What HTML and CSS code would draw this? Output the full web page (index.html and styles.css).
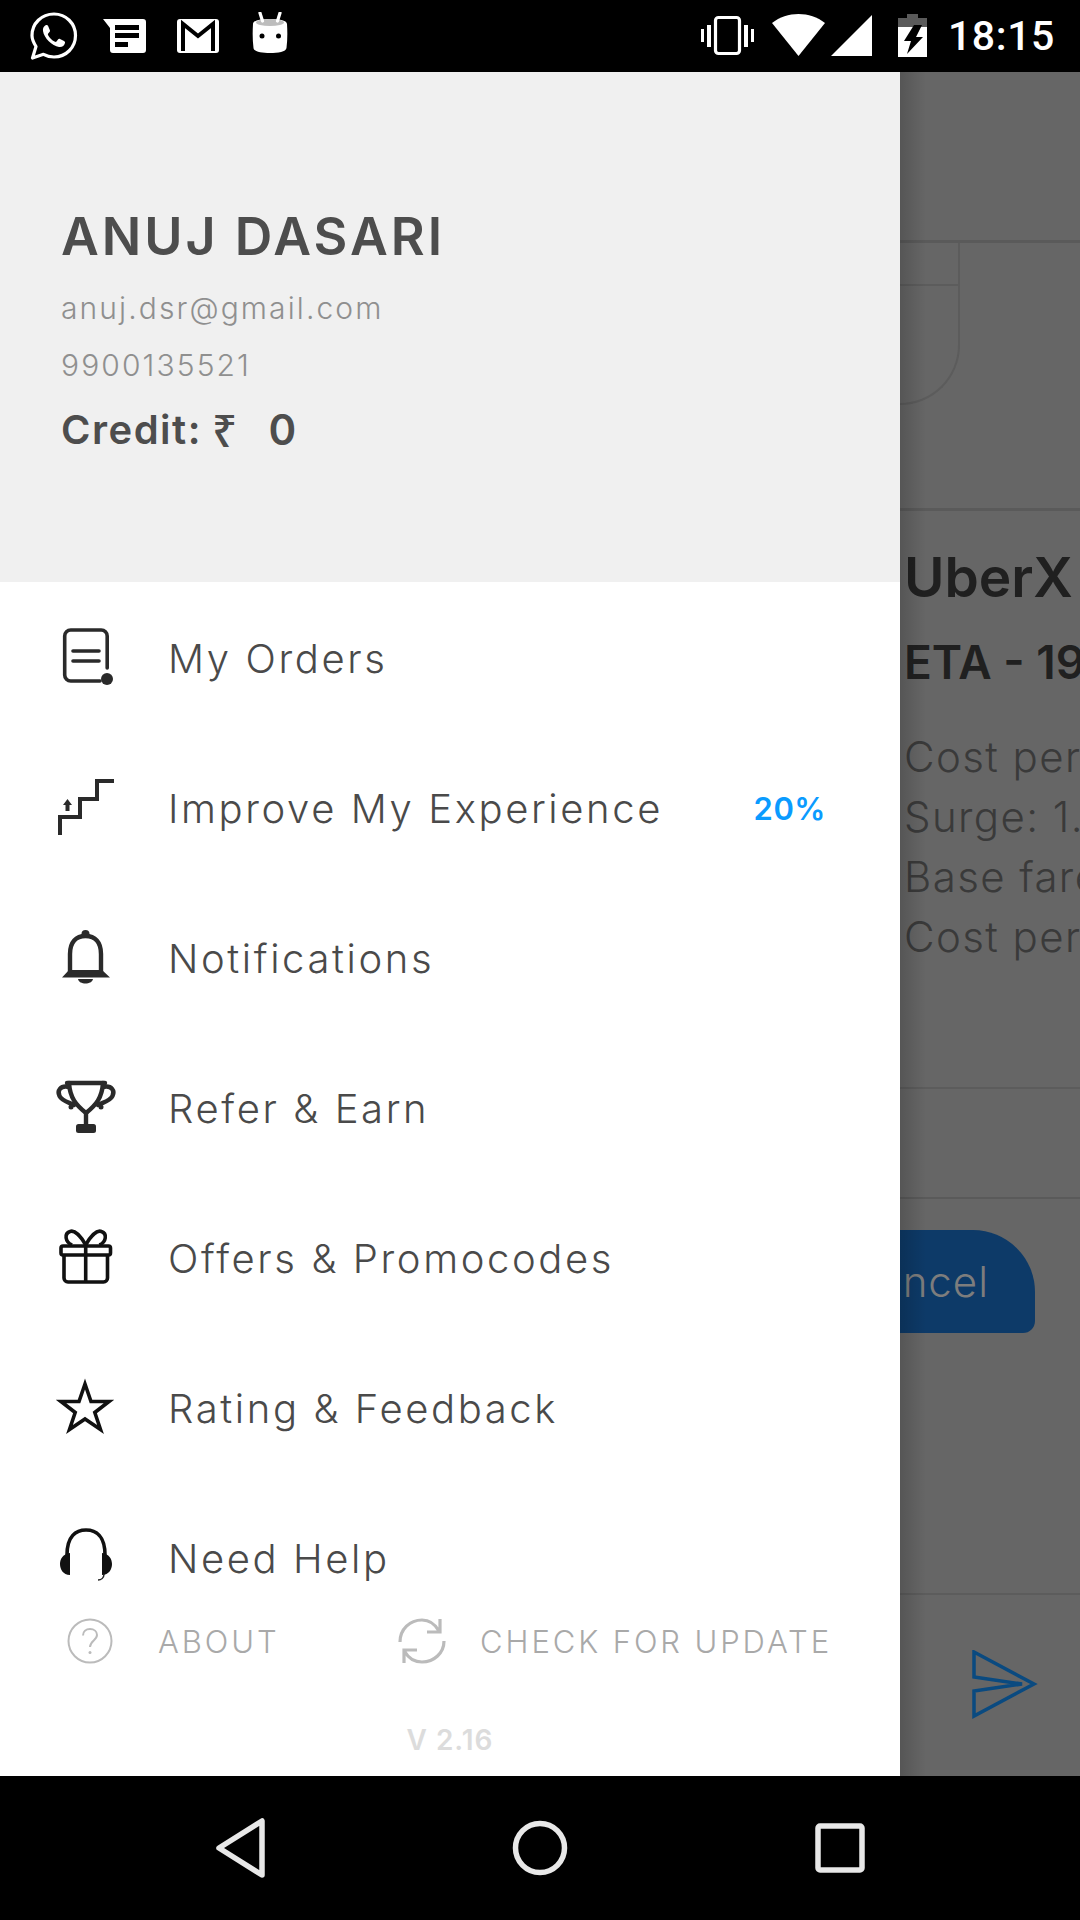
FILE: index.html
```html
<!DOCTYPE html>
<html lang="en">
<head>
<meta charset="utf-8">
<title>Drawer</title>
<link rel="stylesheet" href="styles.css">
</head>
<body>
<div class="screen">
  <header class="statusbar">
    <svg class="st-icon" viewBox="0 0 48 48"><path class="st-line" d="M2.5 46 L6 34.5 C3.5 30.5 2 27 2 23.5 C2 11.5 11.5 2 24 2 C36 2 45.5 11.5 45.5 23.5 C45.5 35.5 36 45 24 45 C20 45 16.5 44 13.5 42.3 Z"/><path class="st-fill" d="M16 13 C14 14 12.5 16 13 19 C14 26 22 34 29 35 C32 35.5 34.5 33.5 35 31 C35.2 30 34.8 29.5 34 29 L30 27 C29 26.6 28.5 27 28 27.6 L26.5 29.5 C26 30 25.5 30 25 29.8 C21.5 28 19.5 26 18 23 C17.8 22.5 17.8 22 18.2 21.6 L19.7 19.8 C20.1 19.3 20.1 18.8 19.9 18.3 L18 13.8 C17.6 13 17 12.8 16 13 Z"/></svg>
    <svg class="st-icon" viewBox="0 0 48 48"><path class="st-fill" d="M1 7 H41 a3 3 0 0 1 3 3 V38 a3 3 0 0 1 -3 3 H11 a3 3 0 0 1 -3 -3 V16 Z"/><path class="st-cut" d="M13 13 H37 V18 H13 Z M13 21 H37 V26 H13 Z M13 30 H26 V35 H13 Z"/></svg>
    <svg class="st-icon" viewBox="0 0 48 48"><rect class="st-fill" x="3" y="7" width="42" height="34" rx="3"/><path class="st-cut-line" d="M9 39 V12 L24 24 L39 12 V39"/></svg>
    <svg class="st-icon" viewBox="0 0 48 48"><path class="st-fill" d="M24 7 C32 7 41 8 41 12 C41.5 20 41.5 28 40.5 36 C40 40 32 41 24 41 C16 41 8 40 7.5 36 C6.5 28 6.5 20 7 12 C7 8 16 7 24 7 Z"/><ellipse class="st-dim" cx="24" cy="10.5" rx="14" ry="3.5"/><path class="st-line" d="M14 1 L16.5 9 M34 1 L31.5 9"/><circle class="st-cut" cx="16" cy="24" r="2.5"/><circle class="st-cut" cx="32.5" cy="24" r="2.5"/></svg>
    <svg class="st-vibrate" viewBox="0 0 55 48"><rect class="st-line" x="16.5" y="5.5" width="24" height="36" rx="3"/><path class="st-fill" d="M2 17 H5 V30 H2 Z M8 13 H12 V35 H8 Z M45 13 H49 V35 H45 Z M52 17 H55 V30 H52 Z"/></svg>
    <svg class="st-wifi" viewBox="0 0 53 48"><path class="st-fill" d="M0 11 C15 -1 38 -1 53 11 L26.5 44 Z"/></svg>
    <svg class="st-signal" viewBox="0 0 41 48"><path class="st-fill" d="M41 3 V44 H0 Z"/></svg>
    <svg class="st-battery" viewBox="0 0 29 48"><path class="st-dark" d="M9 2 H20 V6 H29 V15 H0 V6 H9 Z"/><path class="st-fill" d="M0 15 H29 V45 H0 Z"/><path class="st-cut" d="M16 13 H24 L18 25 H25 L9 42 L13 29 H6 Z"/></svg>
    <span class="clock">18:15</span>
  </header>

  <main class="stage">
    <aside class="drawer">
      <section class="profile">
        <h1 class="profile-name">ANUJ DASARI</h1>
        <p class="profile-contact">anuj.dsr@gmail.com</p>
        <p class="profile-contact">9900135521</p>
        <p class="profile-credit"><span>Credit:</span><span class="rupee">₹</span><span class="credit-value">0</span></p>
      </section>

      <nav class="menu">
        <a class="menu-item">
          <svg class="menu-icon" viewBox="0 0 60 60"><path class="ic-line" d="M51.2 40 V8 a6 6 0 0 0 -6 -6 H14.7 a6 6 0 0 0 -6 6 V47 a6 6 0 0 0 6 6 H44"/><path class="ic-line" d="M17 23 H43 M17 33 H43"/><circle class="ic-fill" cx="51" cy="51" r="6"/></svg>
          <span class="menu-label">My Orders</span>
        </a>
        <a class="menu-item">
          <svg class="menu-icon" viewBox="0 0 60 60"><path class="ic-line ic-square" d="M4 57 V39 H24 V21 H41 V3 H58"/><path class="ic-fill" d="M11.5 21 L16 27 H13.5 V33 H9.5 V27 H7 Z"/></svg>
          <span class="menu-label">Improve My Experience</span>
          <span class="menu-badge">20%</span>
        </a>
        <a class="menu-item">
          <svg class="menu-icon" viewBox="0 0 60 60"><path class="ic-heavy" d="M14 46 V26 C14 14 20 8 29.5 8 C39 8 45 14 45 26 V46"/><path class="ic-fill" d="M6 49.5 L13 42 H46 L54 49.5 Z M22 51 H37 C36.5 54 33 55.5 29.5 55.5 C26 55.5 22.5 54 22 51 Z"/><circle class="ic-fill" cx="29.5" cy="6" r="4"/></svg>
          <span class="menu-label">Notifications</span>
        </a>
        <a class="menu-item">
          <svg class="menu-icon" viewBox="0 0 60 60"><path class="ic-heavy" d="M11 5 H49"/><path class="ic-heavy" d="M13 5 C14 20 20 27 30 35 C40 27 46 20 47 5"/><path class="ic-heavy" d="M30 35 V48"/><rect class="ic-fill" x="20" y="46" width="20" height="9" rx="2.5"/><path class="ic-heavy" d="M13 9 C4 7 1 13 3.5 18 C6 23 12 24 18 27"/><path class="ic-heavy" d="M47 9 C56 7 59 13 56.5 18 C54 23 48 24 42 27"/><circle class="ic-fill" cx="15" cy="29" r="2.5"/><circle class="ic-fill" cx="45" cy="29" r="2.5"/></svg>
          <span class="menu-label">Refer &amp; Earn</span>
        </a>
        <a class="menu-item">
          <svg class="menu-icon" viewBox="0 0 60 60"><rect class="ic-strong" x="5" y="18" width="49.5" height="9" rx="2"/><path class="ic-strong" d="M8 27 V50 a4 4 0 0 0 4 4 H47.5 a4 4 0 0 0 4 -4 V27 M29.7 18 V54"/><path class="ic-strong" d="M29.7 17 C24 7 18 2 14 3.5 C8 5.5 9 14 16 17 M29.7 17 C35.4 7 41.4 2 45.4 3.5 C51.4 5.5 50.4 14 43.4 17"/></svg>
          <span class="menu-label">Offers &amp; Promocodes</span>
        </a>
        <a class="menu-item">
          <svg class="menu-icon" viewBox="0 0 60 60"><path class="ic-strong ic-miter" d="M29 6 L35 23.5 H53 L38.8 34.5 L44.5 51.5 L29 41 L13.5 51.5 L19.2 34.5 L5 23.5 H23 Z"/></svg>
          <span class="menu-label">Rating &amp; Feedback</span>
        </a>
        <a class="menu-item">
          <svg class="menu-icon" viewBox="0 0 60 60"><path class="ic-strong" d="M11 27 C11 8 20 2 30 2 C40 2 49 8 49 27"/><path class="ic-black" d="M14 25 V47 C7 47 4 41 4 36 C4 31 7 26 14 25 Z M46 25 V47 C53 47 56 41 56 36 C56 31 53 26 46 25 Z"/><path class="ic-thin" d="M48 46 C48 50 45 52 42 52"/></svg>
          <span class="menu-label">Need Help</span>
        </a>
      </nav>

      <footer class="drawer-footer">
        <div class="footer-links">
          <svg class="footer-icon" viewBox="0 0 48 48"><circle class="ft-line" cx="24" cy="24" r="21.5"/><path class="ft-line" d="M17 18.5 C17 14.5 20 12 24 12 C28 12 31 14.5 31 18 C31 23 24 24 24 30"/><circle class="ft-dot" cx="24" cy="35.5" r="1.5"/></svg>
          <span class="footer-about">ABOUT</span>
          <svg class="footer-icon footer-refresh" viewBox="0 0 48 48"><path class="ft-strong" d="M2 25 C2 12 12 3 24 3 C31 3 37 7 41 14 M42 2 V15 H29 M46 24 C46 36 36 45 24 45 C17 45 11 42 7 35 M6 46 V33 H19"/></svg>
          <span class="footer-update">CHECK FOR UPDATE</span>
        </div>
        <p class="footer-version">V 2.16</p>
      </footer>
    </aside>

    <div class="backdrop">
      <div class="bd-top"></div>
      <div class="bd-route"><div class="bd-route-line"></div></div>
      <div class="bd-gap"></div>
      <div class="bd-info">
        <p class="bd-title">UberX</p>
        <p class="bd-eta">ETA - 19 min</p>
        <div class="bd-fares">
          <p>Cost per km</p>
          <p>Surge: 1.5x</p>
          <p>Base fare</p>
          <p>Cost per min</p>
        </div>
      </div>
      <div class="bd-spacer"></div>
      <div class="bd-action"><div class="bd-cancel">Cancel</div></div>
      <div class="bd-send">
        <svg class="send-icon" viewBox="0 0 66 70"><path class="send-line" d="M2 2 L62 34 L2 66 V41 L50 34 L2 27 Z"/></svg>
      </div>
    </div>
  </main>

  <footer class="navbar">
    <svg class="nav-back" viewBox="0 0 60 60"><path class="nav-line" d="M49 3 V57 L6 30 Z"/></svg>
    <svg class="nav-home" viewBox="0 0 60 60"><circle class="nav-line" cx="30" cy="30" r="24.5"/></svg>
    <svg class="nav-recent" viewBox="0 0 60 60"><rect class="nav-line" x="8" y="8" width="44" height="44" rx="2"/></svg>
  </footer>
</div>
</body>
</html>
```

FILE: styles.css
```css
* { box-sizing: border-box; margin: 0; padding: 0; }
html, body { width: 1080px; height: 1920px; overflow: hidden; background: #000; }
body { font-family: Inter, "Open Sans", sans-serif; color: #4f4f4f; }
.screen { width: 1080px; height: 1920px; display: flex; flex-direction: column; }

/* status bar */
.statusbar { height: 72px; background: #000; display: flex; align-items: center; padding: 0 25px 0 30px; flex: none; }
.statusbar svg { height: 48px; flex: none; }
.st-icon { width: 48px; margin-right: 24px; }
.st-vibrate { width: 55px; margin-left: auto; }
.st-wifi { width: 53px; margin-left: 18px; }
.st-signal { width: 41px; margin-left: 6px; }
.st-battery { width: 29px; margin-left: 26px; }
.st-fill { fill: #fff; }
.st-cut { fill: #000; }
.st-dim { fill: #bdbdbd; }
.st-dark { fill: #5a5a5a; }
.st-line { fill: none; stroke: #fff; stroke-width: 3.2; stroke-linecap: round; stroke-linejoin: round; }
.st-cut-line { fill: none; stroke: #000; stroke-width: 4; }
.clock { font-family: Roboto, sans-serif; font-size: 41px; font-weight: 500; color: #fff; margin-left: 21px; line-height: 48px; letter-spacing: .6px; }

/* layout */
.stage { flex: 1; min-height: 0; display: flex; }
.drawer { width: 900px; flex: none; background: #fff; display: flex; flex-direction: column; }

/* profile */
.profile { height: 510px; flex: none; background: #f0f0f0; padding: 135px 0 0 61px; }
.profile-name { font-size: 52px; font-weight: 600; line-height: 60px; color: #4d4d4d; letter-spacing: 3px; }
.profile-contact { font-size: 30px; font-weight: 300; line-height: 57px; color: #8f8f8f; letter-spacing: 2.1px; }
.profile-contact:first-of-type { margin-top: 13px; }
.profile-credit { font-size: 40px; font-weight: 600; line-height: 60px; color: #4d4d4d; display: flex; margin-top: 6px; letter-spacing: 1.5px; }
.rupee { margin-left: 10px; font-weight: 500; font-family: "Noto Sans", "DejaVu Sans", sans-serif; font-size: 44px; }
.credit-value { margin-left: 30px; font-size: 42px; }

/* menu */
.menu { flex: 1; min-height: 0; overflow: hidden; padding-top: 1px; }
.menu-item { height: 150px; display: flex; align-items: center; padding: 0 74px 0 56px; }
.menu-icon { width: 60px; height: 60px; flex: none; overflow: visible; }
.menu-label { margin-left: 52px; font-size: 40px; font-weight: 300; color: #4a4a4a; letter-spacing: 2.6px; white-space: nowrap; }
.menu-badge { margin-left: auto; font-size: 31px; font-weight: 600; color: #0a9bff; letter-spacing: .5px; }
.ic-line { fill: none; stroke: #2a2a2a; stroke-width: 3.6; stroke-linecap: round; stroke-linejoin: round; }
.ic-square { stroke-linecap: butt; stroke-linejoin: miter; stroke-width: 4; }
.ic-heavy { fill: none; stroke: #2a2a2a; stroke-width: 4.4; stroke-linecap: round; stroke-linejoin: round; }
.ic-fill { fill: #2a2a2a; }
.ic-strong { fill: none; stroke: #111; stroke-width: 3.6; stroke-linejoin: round; }
.ic-miter { stroke-linejoin: miter; }
.ic-black { fill: #111; }
.ic-thin { fill: none; stroke: #222; stroke-width: 1.5; }

/* footer */
.drawer-footer { height: 180px; flex: none; background: #fff; padding-top: 21px; }
.footer-links { display: flex; align-items: center; height: 48px; padding-left: 66px; }
.footer-icon { width: 48px; height: 48px; flex: none; }
.footer-about, .footer-update { font-size: 31px; font-weight: 300; color: #a9a9a9; white-space: nowrap; letter-spacing: 2.9px; }
.footer-about { margin-left: 44px; }
.footer-refresh { margin-left: auto; }
.footer-update { margin-left: 34px; margin-right: 68px; }
.ft-line { fill: none; stroke: #bbb; stroke-width: 2; }
.ft-strong { fill: none; stroke: #bbb; stroke-width: 3.2; }
.ft-dot { fill: #bbb; }
.footer-version { margin-top: 55px; text-align: center; font-size: 28px; line-height: 40px; font-weight: 600; color: #dcdcdc; letter-spacing: 1px; }

/* dimmed page behind drawer */
.backdrop { flex: 1; min-width: 0; position: relative; overflow: hidden; background: #666; display: flex; flex-direction: column; }
.backdrop::before { content: ""; position: absolute; left: 0; top: 0; bottom: 0; width: 26px; background: linear-gradient(to right, rgba(0,0,0,.16), rgba(0,0,0,0)); }
.bd-top { height: 171px; flex: none; border-bottom: 3px solid #5a5a5a; }
.bd-route { height: 162px; width: 120px; margin-left: -60px; flex: none; border-right: 2px solid #5c5c5c; border-bottom: 2px solid #5c5c5c; border-bottom-right-radius: 60px; }
.bd-route-line { height: 43px; border-bottom: 2px solid #5c5c5c; }
.bd-gap { height: 106px; flex: none; border-bottom: 3px solid #5a5a5a; }
.bd-info { height: 578px; flex: none; padding: 30px 0 0 4px; border-bottom: 2px solid #5c5c5c; white-space: nowrap; }
.bd-title { font-size: 55px; font-weight: 600; line-height: 72px; color: #202020; }
.bd-eta { font-size: 46px; font-weight: 600; line-height: 72px; color: #202020; margin-top: 13px; }
.bd-fares { margin-top: 29px; font-size: 42px; font-weight: 300; line-height: 60px; color: #3a3a3a; letter-spacing: 1.4px; }
.bd-spacer { height: 110px; flex: none; border-bottom: 2px solid #5a5a5a; }
.bd-action { height: 396px; flex: none; padding-top: 31px; border-bottom: 2px solid #5c5c5c; }
.bd-cancel { width: 135px; height: 103px; background: #0d3a68; border-radius: 0 62px 12px 0; display: flex; align-items: center; justify-content: flex-end; padding-right: 46px; color: #7d7d7d; font-size: 42px; font-weight: 300; white-space: nowrap; overflow: hidden; letter-spacing: 1px; }
.bd-send { padding: 55px 0 0 72px; }
.send-icon { width: 66px; height: 70px; display: block; }
.send-line { fill: none; stroke: #0a4a80; stroke-width: 3.5; stroke-linejoin: miter; }

/* navigation */
.navbar { height: 144px; flex: none; background: #000; display: flex; align-items: center; }
.navbar svg { width: 60px; height: 60px; flex: none; }
.nav-back { margin-left: 213px; }
.nav-home { margin-left: 237px; }
.nav-recent { margin-left: 240px; }
.nav-line { fill: none; stroke: #e8e8e8; stroke-width: 5.5; stroke-linejoin: round; }
```
